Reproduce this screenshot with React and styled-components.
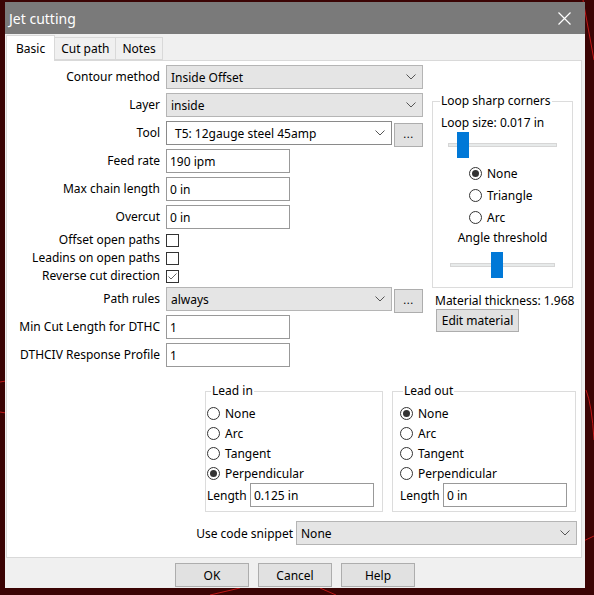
import React from 'react';
import styled, { createGlobalStyle } from 'styled-components';

const Global = createGlobalStyle`
  html, body { margin: 0; padding: 0; background: #3b0404; }
  body {
    font-family: "Noto Sans", "Open Sans", sans-serif;
    font-size: 12px;
    color: #000;
    overflow: hidden;
  }
  * { box-sizing: border-box; }
`;

const Desktop = styled.div`
  position: relative;
  width: 594px;
  height: 595px;
  padding: 2px 0 0 5px;
  background: #3b0404;
  overflow: hidden;
`;

const Backdrop = styled.svg`
  position: absolute;
  left: 0;
  top: 0;
  width: 594px;
  height: 595px;
`;

const Window = styled.div`
  position: relative;
  z-index: 1;
  width: 580px;
  height: 586px;
  background: #f0f0f0;
  display: flex;
  flex-direction: column;
`;

const TitleBar = styled.div`
  height: 32px;
  flex: none;
  display: flex;
  align-items: center;
  padding-left: 4px;
  background: #7a7a7a;
  color: #fff;
  font-size: 14px;
`;

const CloseButton = styled.div`
  margin-left: auto;
  width: 42px;
  height: 32px;
  display: flex;
  align-items: center;
  justify-content: center;
`;

const TabStrip = styled.div`
  height: 26px;
  flex: none;
  display: flex;
  align-items: flex-end;
  padding-left: 1px;
`;

const Tab = styled.div`
  height: ${p => (p.$active ? '26px' : '23px')};
  padding: 0 ${p => (p.$active ? '9px' : '6px')};
  margin-bottom: ${p => (p.$active ? '-1px' : '0')};
  position: relative;
  z-index: ${p => (p.$active ? 2 : 1)};
  display: flex;
  align-items: center;
  background: ${p => (p.$active ? '#fff' : '#f0f0f0')};
  border: 1px solid #d9d9d9;
  border-bottom: ${p => (p.$active ? 'none' : '1px solid #d9d9d9')};
  border-left-width: ${p => (p.$first ? '1px' : '0')};
  font-size: 12px;
`;

const Panel = styled.div`
  height: 498px;
  flex: none;
  margin: 0 3px 0 1px;
  background: #fff;
  border: 1px solid #d9d9d9;
  padding: 4px 0 0 3px;
  display: flex;
  flex-direction: column;
`;

const TopSection = styled.div`
  display: flex;
  align-items: flex-start;
`;

const FormGrid = styled.div`
  display: grid;
  grid-template-columns: 150px 257px;
  grid-template-rows: repeat(6, 24px) repeat(3, 14px) repeat(3, 24px);
  column-gap: 6px;
  row-gap: 4px;
`;

const Label = styled.div`
  align-self: center;
  justify-self: end;
  white-space: nowrap;
  line-height: 16px;
`;

const FieldRow = styled.div`
  display: flex;
  gap: 2px;
  align-items: flex-start;
`;

const ComboBox = styled.div`
  height: 24px;
  width: ${p => p.$width || 'auto'};
  flex: ${p => (p.$width ? 'none' : '1')};
  display: flex;
  align-items: center;
  padding: 0 6px 0 ${p => (p.$editable ? '8px' : '4px')};
  background: ${p => (p.$editable ? '#fff' : '#e5e5e5')};
  border: 1px solid ${p => (p.$editable ? '#8a8a8a' : '#b5b5b5')};
  white-space: nowrap;
`;

const ComboText = styled.span`
  flex: 1;
`;

const TextBox = styled.div`
  width: ${p => p.$width || '124px'};
  height: 24px;
  display: flex;
  align-items: center;
  padding-left: 3px;
  background: #fff;
  border: 1px solid #999;
  white-space: nowrap;
`;

const MoreButton = styled.div`
  width: 29px;
  height: 24px;
  margin-top: 2px;
  display: flex;
  align-items: center;
  justify-content: center;
  padding-bottom: 3px;
  background: #e1e1e1;
  border: 1px solid #adadad;
  font-size: 11px;
  letter-spacing: 0.5px;
`;

const CheckBoxBox = styled.div`
  width: 13px;
  height: 13px;
  align-self: center;
  border: 1px solid #333;
  background: #fff;
  display: flex;
  align-items: center;
  justify-content: center;
`;

const RightColumn = styled.div`
  margin-left: 9px;
  width: 141px;
  display: flex;
  flex-direction: column;
`;

const Group = styled.fieldset`
  margin: ${p => p.$mt || '0'} 0 0 0;
  width: ${p => p.$width};
  border: 1px solid #dcdcdc;
  padding: ${p => p.$pad};
  display: flex;
  flex-direction: column;
  min-width: 0;
`;

const Legend = styled.legend`
  padding: 0 1px;
  margin-left: ${p => p.$indent || '-1px'};
  line-height: 16px;
  font-size: 12px;
`;

const Text = styled.div`
  line-height: 16px;
  margin-top: ${p => p.$mt || '0'};
  margin-left: ${p => p.$ml || '0'};
  text-align: ${p => p.$align || 'left'};
  white-space: nowrap;
`;

const SliderWrap = styled.div`
  position: relative;
  width: ${p => p.$width};
  height: 26px;
  margin-top: ${p => p.$mt};
  margin-left: ${p => p.$ml};
  display: flex;
  align-items: center;
`;

const SliderTrack = styled.div`
  width: 100%;
  height: 4px;
  background: #e7eaea;
  border: 1px solid #d6d6d6;
`;

const SliderThumb = styled.div`
  position: absolute;
  top: 0;
  width: 12px;
  height: 26px;
  background: #0078d7;
`;

const RadioList = styled.div`
  display: flex;
  flex-direction: column;
  margin-top: ${p => p.$mt || '0'};
  padding-left: ${p => p.$pl || '0'};
`;

const RadioRow = styled.div`
  height: ${p => p.$h || '20px'};
  display: flex;
  align-items: center;
  gap: 5px;
  white-space: nowrap;
`;

const RadioCircle = styled.div`
  width: 13px;
  height: 13px;
  border-radius: 50%;
  border: 1px solid #333;
  background: #fff;
  display: flex;
  align-items: center;
  justify-content: center;
  &::after {
    content: '';
    display: ${p => (p.$checked ? 'block' : 'none')};
    width: 7px;
    height: 7px;
    border-radius: 50%;
    background: #333;
  }
`;

const PushButton = styled.div`
  width: ${p => p.$width};
  height: ${p => p.$height || '24px'};
  margin-left: ${p => p.$ml || '0'};
  display: flex;
  align-items: center;
  justify-content: center;
  background: #e1e1e1;
  border: 1px solid #adadad;
  white-space: nowrap;
`;

const LeadRow = styled.div`
  display: flex;
  justify-content: flex-end;
  gap: 9px;
  margin-top: 16px;
  padding-right: 5px;
`;

const LengthRow = styled.div`
  height: 24px;
  display: flex;
  align-items: center;
`;

const LengthLabel = styled.div`
  width: 43px;
  flex: none;
`;

const SnippetRow = styled.div`
  display: flex;
  justify-content: flex-end;
  align-items: center;
  gap: 3px;
  margin-top: 9px;
  padding-right: 4px;
`;

const ButtonBar = styled.div`
  flex: 1;
  display: flex;
  justify-content: center;
  gap: 9px;
  padding-top: 5px;
`;

const Chevron = () => (
  <svg width="10" height="6" viewBox="0 0 10 6">
    <path d="M0.5 0.5 L5 5 L9.5 0.5" fill="none" stroke="#555" strokeWidth="1" />
  </svg>
);

const Combo = ({ children, editable, width }) => (
  <ComboBox $editable={editable} $width={width}>
    <ComboText>{children}</ComboText>
    <Chevron />
  </ComboBox>
);

const CheckBox = ({ checked }) => (
  <CheckBoxBox>
    {checked && (
      <svg width="11" height="11" viewBox="0 0 11 11">
        <path d="M1.5 5.5 L4 8 L9.5 2.5" fill="none" stroke="#666" strokeWidth="1" />
      </svg>
    )}
  </CheckBoxBox>
);

const Radio = ({ label, checked, h }) => (
  <RadioRow $h={h}>
    <RadioCircle $checked={checked} />
    <span>{label}</span>
  </RadioRow>
);

const Slider = ({ width, ml, mt, pos }) => (
  <SliderWrap $width={width} $ml={ml} $mt={mt}>
    <SliderTrack />
    <SliderThumb style={{ left: pos }} />
  </SliderWrap>
);

const LeadGroup = ({ title, width, pad, indent, checked, length }) => (
  <Group $width={width} $pad={pad}>
    <Legend $indent={indent}>{title}</Legend>
    <RadioList>
      {['None', 'Arc', 'Tangent', 'Perpendicular'].map(o => (
        <Radio key={o} label={o} checked={o === checked} />
      ))}
    </RadioList>
    <LengthRow>
      <LengthLabel>Length</LengthLabel>
      <TextBox>{length}</TextBox>
    </LengthRow>
  </Group>
);

export default function App() {
  return (
    <>
      <Global />
      <Desktop>
        <Backdrop viewBox="0 0 594 595">
          <g stroke="#c01818" strokeWidth="1" fill="none">
            <path d="M583 0 L594 60" />
            <path d="M586 390 Q592 405 594 440" />
            <path d="M0 382 L6 381" />
            <path d="M0 412 L6 413" />
            <path d="M210 595 L240 588" />
            <path d="M575 545 L594 536" />
            <path d="M320 588 L336 595" />
          </g>
        </Backdrop>
        <Window>
          <TitleBar>
            <span>Jet cutting</span>
            <CloseButton>
              <svg width="13" height="13" viewBox="0 0 13 13">
                <path d="M0.5 0.5 L12.5 12.5 M12.5 0.5 L0.5 12.5" stroke="#fff" strokeWidth="1.2" />
              </svg>
            </CloseButton>
          </TitleBar>
          <TabStrip>
            <Tab $active $first>Basic</Tab>
            <Tab>Cut path</Tab>
            <Tab>Notes</Tab>
          </TabStrip>
          <Panel>
            <TopSection>
              <FormGrid>
                <Label>Contour method</Label>
                <Combo>Inside Offset</Combo>
                <Label>Layer</Label>
                <Combo>inside</Combo>
                <Label>Tool</Label>
                <FieldRow>
                  <Combo editable>T5: 12gauge steel 45amp</Combo>
                  <MoreButton>...</MoreButton>
                </FieldRow>
                <Label>Feed rate</Label>
                <TextBox>190 ipm</TextBox>
                <Label>Max chain length</Label>
                <TextBox>0 in</TextBox>
                <Label>Overcut</Label>
                <TextBox>0 in</TextBox>
                <Label>Offset open paths</Label>
                <CheckBox />
                <Label>Leadins on open paths</Label>
                <CheckBox />
                <Label>Reverse cut direction</Label>
                <CheckBox checked />
                <Label>Path rules</Label>
                <FieldRow>
                  <Combo>always</Combo>
                  <MoreButton>...</MoreButton>
                </FieldRow>
                <Label>Min Cut Length for DTHC</Label>
                <TextBox>1</TextBox>
                <Label>DTHCIV Response Profile</Label>
                <TextBox>1</TextBox>
              </FormGrid>
              <RightColumn>
                <Group $mt="28px" $width="141px" $pad="6px 8px 9px 8px">
                  <Legend>Loop sharp corners</Legend>
                  <Text>Loop size: 0.017 in</Text>
                  <Slider width="109px" ml="7px" mt="1px" pos="9px" />
                  <RadioList $mt="4px" $pl="28px">
                    <Radio label="None" checked h="22px" />
                    <Radio label="Triangle" h="22px" />
                    <Radio label="Arc" h="22px" />
                  </RadioList>
                  <Text $mt="2px" $align="center">Angle threshold</Text>
                  <Slider width="105px" ml="9px" mt="6px" pos="41px" />
                </Group>
                <Text $mt="5px" $ml="3px">Material thickness: 1.968</Text>
                <PushButton $width="83px" $height="23px" $ml="4px">Edit material</PushButton>
              </RightColumn>
            </TopSection>
            <LeadRow>
              <LeadGroup title="Lead in" width="178px" pad="4px 4px 4px 1px" indent="4px" checked="Perpendicular" length="0.125 in" />
              <LeadGroup title="Lead out" width="184px" pad="4px 4px 4px 7px" indent="3px" checked="None" length="0 in" />
            </LeadRow>
            <SnippetRow>
              <span>Use code snippet</span>
              <Combo width="281px">None</Combo>
            </SnippetRow>
          </Panel>
          <ButtonBar>
            <PushButton $width="74px">OK</PushButton>
            <PushButton $width="74px">Cancel</PushButton>
            <PushButton $width="74px">Help</PushButton>
          </ButtonBar>
        </Window>
      </Desktop>
    </>
  );
}
